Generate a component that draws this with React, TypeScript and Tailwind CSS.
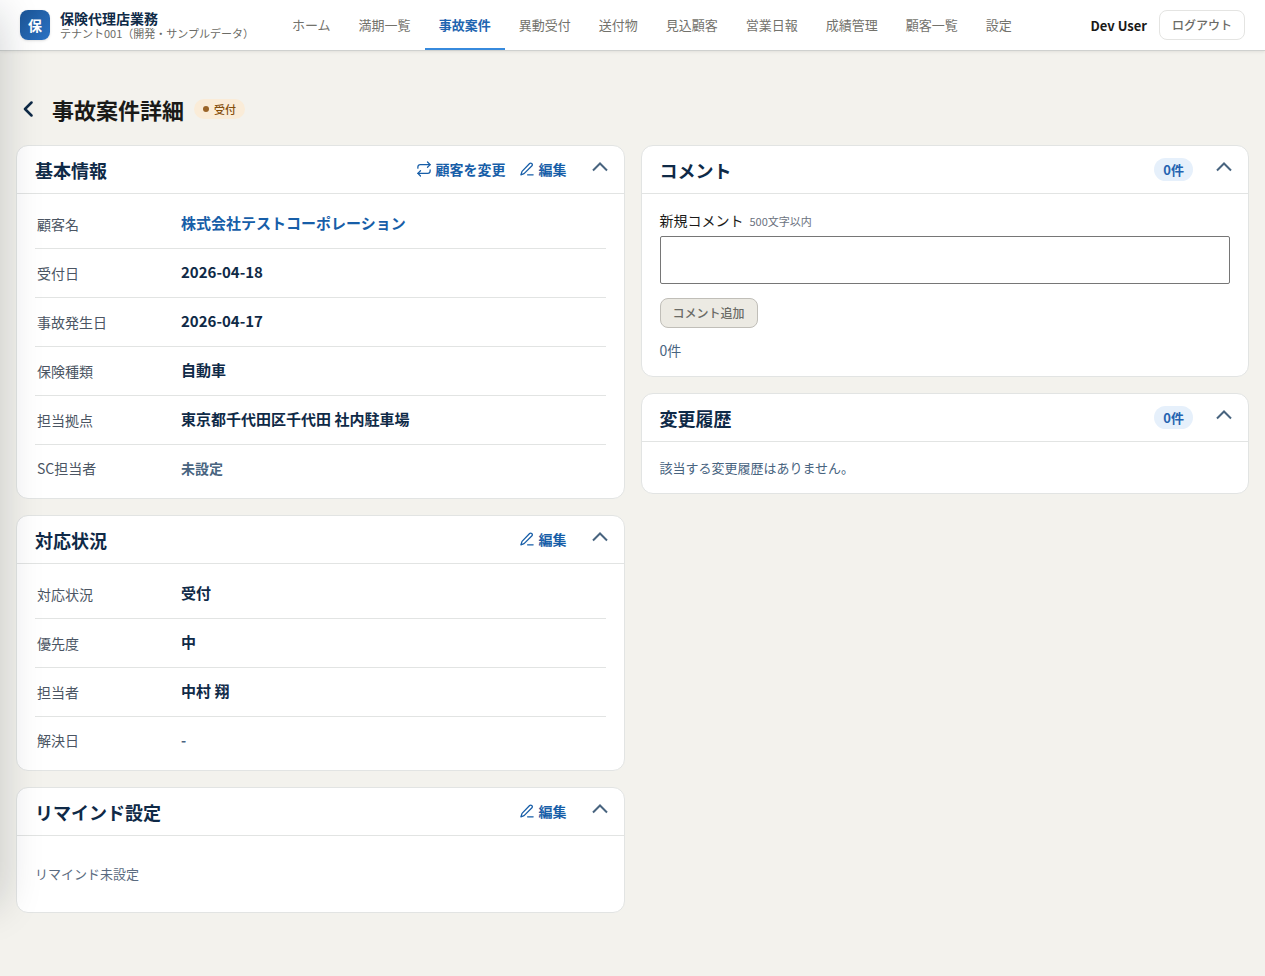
import type { ReactNode } from "react";
import { clsx } from "clsx";

const navItems = [
  "ホーム",
  "満期一覧",
  "事故案件",
  "異動受付",
  "送付物",
  "見込顧客",
  "営業日報",
  "成績管理",
  "顧客一覧",
  "設定",
];

const currentNav = "事故案件";

type Row = {
  label: string;
  value: string;
  kind?: "link" | "muted";
};

const basicRows: Row[] = [
  { label: "顧客名", value: "株式会社テストコーポレーション", kind: "link" },
  { label: "受付日", value: "2026-04-18" },
  { label: "事故発生日", value: "2026-04-17" },
  { label: "保険種類", value: "自動車" },
  { label: "担当拠点", value: "東京都千代田区千代田 社内駐車場" },
  { label: "SC担当者", value: "未設定", kind: "muted" },
];

const statusRows: Row[] = [
  { label: "対応状況", value: "受付" },
  { label: "優先度", value: "中" },
  { label: "担当者", value: "中村 翔" },
  { label: "解決日", value: "-", kind: "muted" },
];

const PenIcon = () => (
  <svg viewBox="0 0 24 24" className="size-3.5" fill="none" stroke="currentColor" strokeWidth="2.2" strokeLinecap="round" strokeLinejoin="round" aria-hidden="true">
    <path d="M13 22h9.500" />
    <path d="M16.500 2.500a2.400 2.400 0 0 1 3.400 0l.6.6a2.400 2.400 0 0 1 0 3.400L7 20l-5.500 2L3.500 16z" />
  </svg>
);

const SwapIcon = () => (
  <svg viewBox="0 0 24 24" className="size-3.5 overflow-visible" fill="none" stroke="currentColor" strokeWidth="2.2" strokeLinecap="round" strokeLinejoin="round" aria-hidden="true">
    <path d="m18 0 4.500 4.500L18 9" />
    <path d="M1.500 10.500v-2a4 4 0 0 1 4-4h17" />
    <path d="m6 24-4.500-4.500L6 15" />
    <path d="M22.500 13.500v2a4 4 0 0 1-4 4h-17" />
  </svg>
);

const ActionButton = ({ icon, children }: { icon: ReactNode; children: ReactNode }) => (
  <button type="button" className="flex items-center gap-[5px] pb-0.5 text-sm font-bold text-[#175ea8]">
    {icon}
    {children}
  </button>
);

const CountBadge = ({ children }: { children: ReactNode }) => (
  <span className="-mr-0.5 rounded-full bg-[#e6f0fb] px-[9px] text-[13px] leading-[23px] font-bold text-[#2563b0]">
    {children}
  </span>
);

type CardProps = {
  title: string;
  actions?: ReactNode;
  children: ReactNode;
};

const Card = ({ title, actions, children }: CardProps) => (
  <section className="overflow-hidden rounded-xl border border-[#e2e4e3] bg-white">
    <header className="flex h-12 items-center border-b border-[#e2e4e3] px-[18px]">
      <h2 className="flex-1 text-lg font-bold text-[#0f2a47]">{title}</h2>
      <div className="flex items-center gap-3.5">{actions}</div>
      <button type="button" aria-label={`${title}を折りたたむ`} className="-mr-1.5 ml-[21px] flex size-6 items-center justify-center pb-1.5 text-[#48647f]">
        <svg viewBox="0 0 16 10" className="h-2.5 w-4" fill="none" stroke="currentColor" strokeWidth="2" aria-hidden="true">
          <path d="m1 8.500 7-7 7 7" />
        </svg>
      </button>
    </header>
    {children}
  </section>
);

const RowList = ({ rows }: { rows: Row[] }) => (
  <dl className="px-[18px] py-1.5">
    {rows.map(({ label, value, kind }) => (
      <div key={label} className="flex h-[49px] items-center border-b border-[#e2e4e3] px-0.5 pb-px last:h-[47px] last:border-b-0">
        <dt className="w-36 shrink-0 text-sm text-[#4b5563]">{label}</dt>
        <dd className={clsx("font-bold", kind === "muted" ? "text-sm text-[#48647f]" : "text-[15px] text-[#0f2a47]")}>
          {kind === "link" ? (
            <a href="#customer" className="text-[#175ea8]">{value}</a>
          ) : (
            value
          )}
        </dd>
      </div>
    ))}
  </dl>
);

const TopBar = () => (
  <header className="flex h-[51px] items-center border-b border-[#cfd1cf] bg-white px-5 shadow-[0_1px_3px_rgba(0,0,0,0.08)]">
    <span className="flex size-[30px] shrink-0 items-center justify-center rounded-lg bg-linear-to-br from-[#1c5596] to-[#2a72c4] text-sm font-bold text-white shadow-sm">
      保
    </span>
    <div className="ml-2.5 shrink-0">
      <p className="text-sm leading-4 font-bold text-[#0f2a47]">保険代理店業務</p>
      <p className="text-[11px] leading-[14px] text-[#6b6b66]">テナント001（開発・サンプルデータ）</p>
    </div>
    <nav className="ml-6 flex h-full">
      {navItems.map((item) => (
        <a
          key={item}
          href="#nav"
          aria-current={item === currentNav ? "page" : undefined}
          className={clsx(
            "flex items-center border-b-2 px-3.5 pt-0.5 text-[13px] whitespace-nowrap",
            item === currentNav ? "border-[#378add] font-bold text-[#1f65b0]" : "border-transparent text-[#73726c]",
          )}
        >
          {item}
        </a>
      ))}
    </nav>
    <span className="ml-auto pt-0.5 text-[13px] font-bold whitespace-nowrap text-[#1a1a18]">Dev User</span>
    <button type="button" className="ml-3 h-[30px] shrink-0 rounded-lg border border-[#e4e4e2] px-3 text-xs font-medium text-[#6b6b66]">
      ログアウト
    </button>
  </header>
);

export default function App() {
  return (
    <div className="min-h-screen overflow-x-hidden bg-[#f3f2ed] font-['Noto_Sans_CJK_JP',sans-serif] text-[#1a1a18]">
      <TopBar />

      {/* closed drawer, only its shadow reaches the page */}
      <aside aria-hidden="true" className="pointer-events-none fixed top-0 bottom-[84px] -left-72 w-72 shadow-[0_12px_40px_rgba(15,25,35,0.2)]" />

      <main className="px-4 pt-11 pb-16">
        <div className="mb-[22px] flex h-7 items-center">
          <button type="button" aria-label="戻る" className="flex size-6 items-center justify-center text-[#0f2a47]">
            <svg viewBox="0 0 10 16" className="h-4 w-2.5" fill="none" stroke="currentColor" strokeWidth="2.500" strokeLinecap="round" strokeLinejoin="round" aria-hidden="true">
              <path d="M8.500 1.500 2 8l6.500 6.500" />
            </svg>
          </button>
          <h1 className="ml-3 text-[22px] leading-8 font-bold">事故案件詳細</h1>
          <span className="ml-2.5 flex h-5 items-center gap-[5px] rounded-full bg-[#faecd8] px-[9px] text-[11px] font-medium text-[#854f0b]">
            <span className="size-1.5 rounded-full bg-[#9a6428]" />
            受付
          </span>
        </div>

        <div className="grid grid-cols-2 items-start gap-4">
          <div className="grid gap-4">
            <Card
              title="基本情報"
              actions={
                <>
                  <ActionButton icon={<SwapIcon />}>顧客を変更</ActionButton>
                  <ActionButton icon={<PenIcon />}>編集</ActionButton>
                </>
              }
            >
              <RowList rows={basicRows} />
            </Card>
            <Card title="対応状況" actions={<ActionButton icon={<PenIcon />}>編集</ActionButton>}>
              <RowList rows={statusRows} />
            </Card>
            <Card title="リマインド設定" actions={<ActionButton icon={<PenIcon />}>編集</ActionButton>}>
              <p className="px-[18px] py-7 text-[13px] leading-5 text-[#5a6b80]">リマインド未設定</p>
            </Card>
          </div>

          <div className="grid gap-4">
            <Card title="コメント" actions={<CountBadge>0件</CountBadge>}>
              <form className="px-[18px] pt-4 pb-4">
                <label htmlFor="comment" className="flex items-baseline gap-1.5 text-sm leading-5">
                  新規コメント
                  <small className="text-[11px] text-[#6b7280]">500文字以内</small>
                </label>
                <textarea id="comment" className="mt-[5px] block h-12 w-full resize-none rounded-[2px] border border-[#767676] bg-white p-2 text-sm" />
                <button type="button" disabled className="mt-3.5 h-[30px] rounded-lg border border-[#c0beb8] bg-[#eceae3] px-3 text-xs font-medium text-[#6b6b66]">
                  コメント追加
                </button>
                <p className="mt-3 text-sm text-[#48647f]">0件</p>
              </form>
            </Card>
            <Card title="変更履歴" actions={<CountBadge>0件</CountBadge>}>
              <p className="px-[18px] pt-4 pb-[15px] text-[13px] leading-5 text-[#48647f]">該当する変更履歴はありません。</p>
            </Card>
          </div>
        </div>
      </main>
    </div>
  );
}
